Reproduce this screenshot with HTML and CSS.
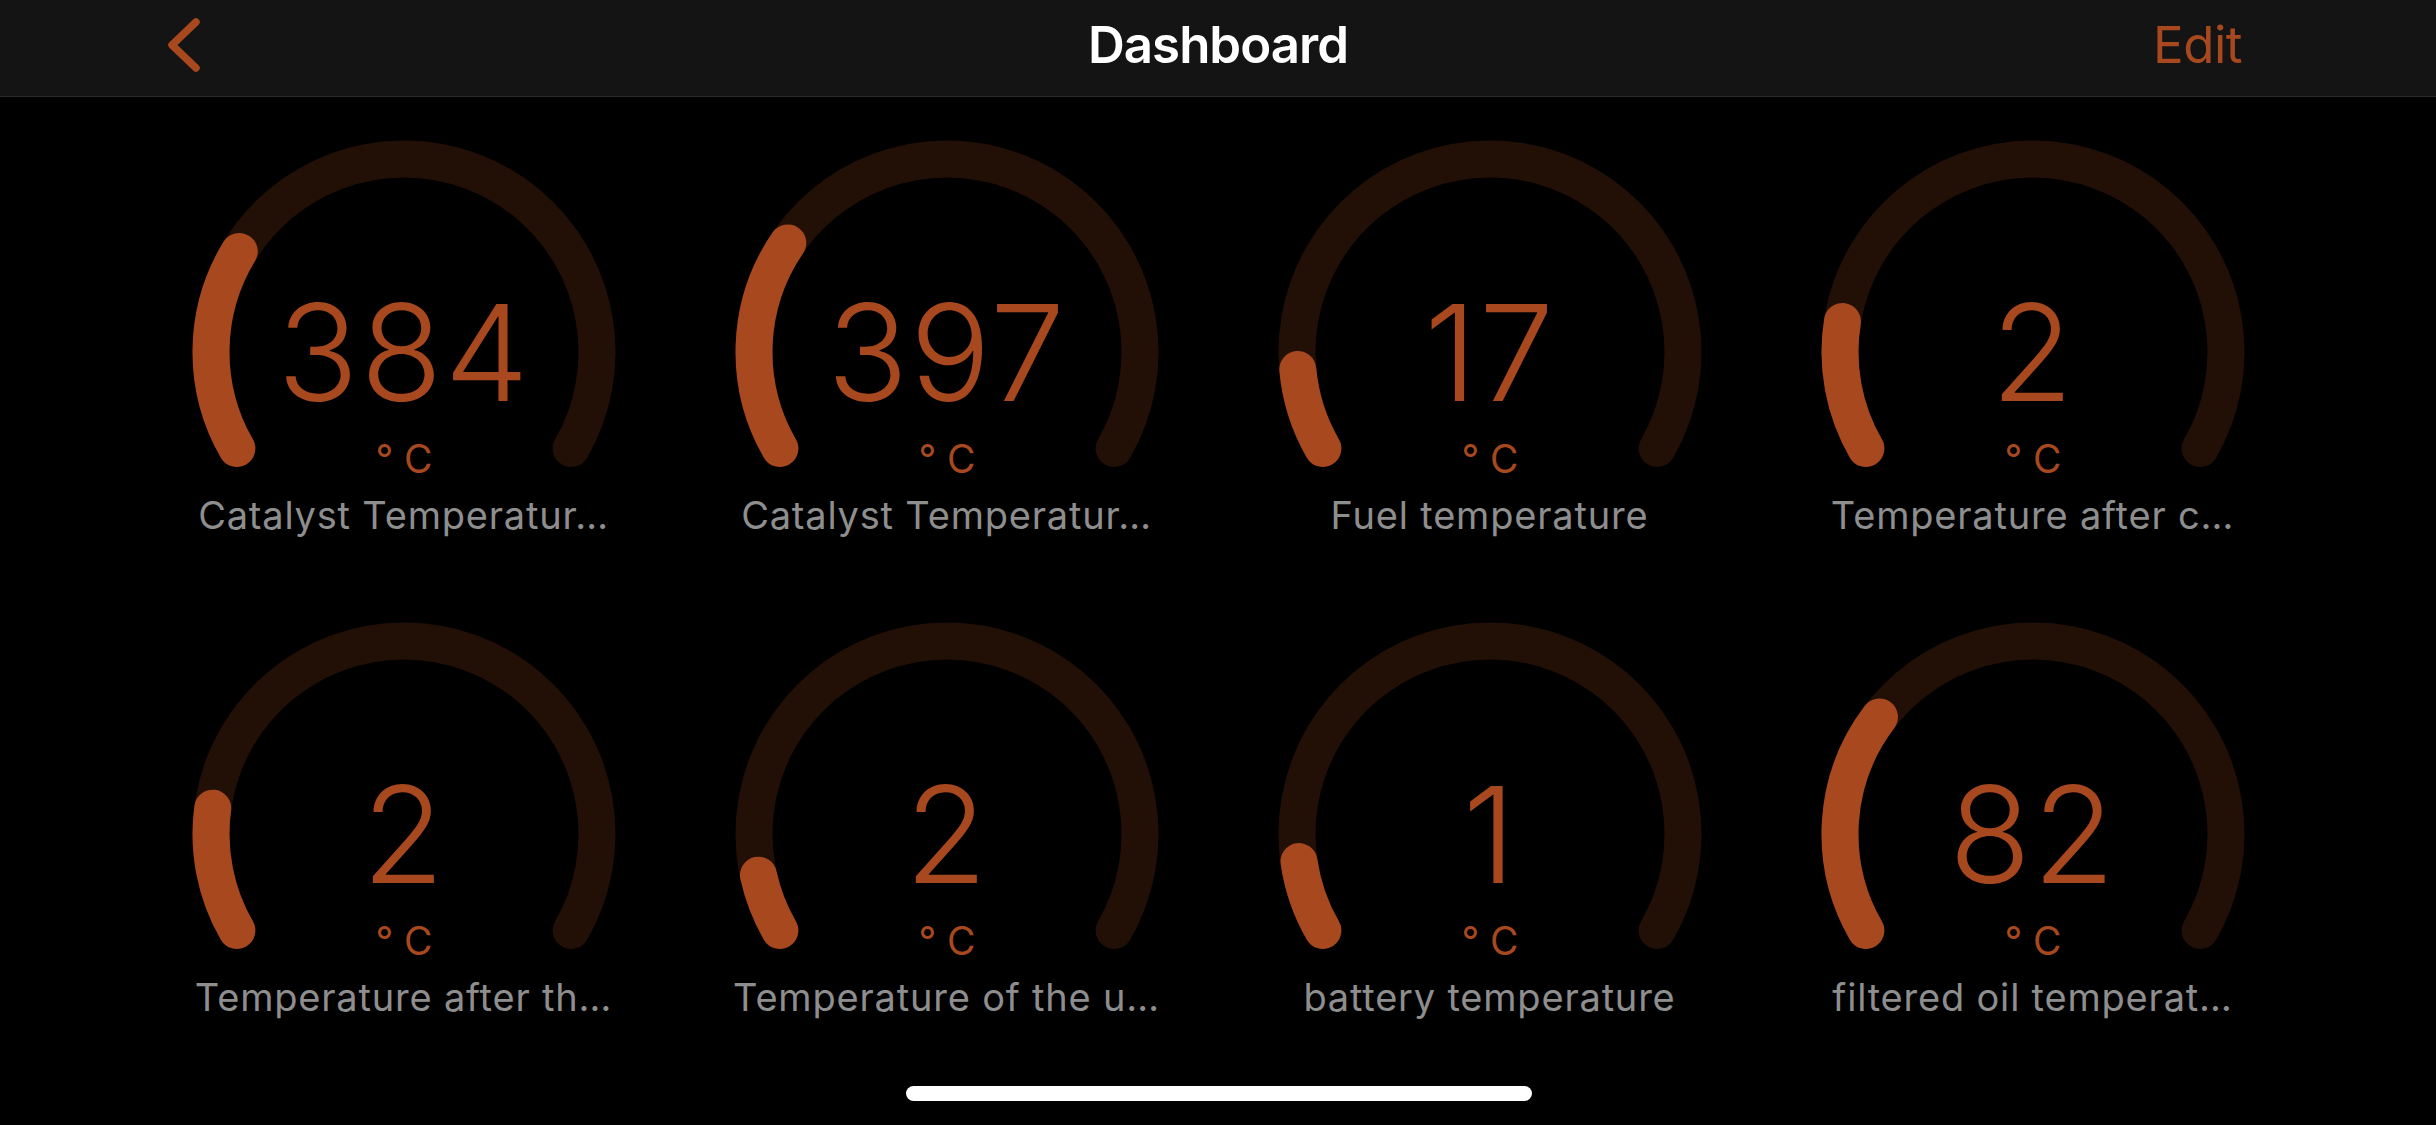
FILE: index.html
```html
<!DOCTYPE html>
<html lang="en">

<head>
  <meta charset="UTF-8">
  <meta name="viewport" content="width=device-width, initial-scale=1.0">
  <title>Dashboard</title>
  <link rel="stylesheet" href="styles.css">
</head>

<body>

  <div id="navBar">
    <div class="nav-left">
      <svg class="back-icon" width="40" height="89" viewBox="0 0 40 89">
        <polyline points="28,22 4,45 28,68" />
      </svg>
    </div>
    <div class="nav-title">Dashboard</div>
    <div class="nav-right">Edit</div>
  </div>

  <div id="gaugeGrid">

    <!-- row 1 -->
    <div class="gauge">
      <svg class="dial" width="424" height="345" viewBox="0 0 424 345">
        <path class="track" d="M44.86 308.5 A193 193 0 1 1 379.14 308.5" />
        <path class="fill" pathLength="240" stroke-dasharray="61.4 400" d="M44.86 308.5 A193 193 0 1 1 379.14 308.5" />
        <text class="value" x="212" y="261">384</text>
        <text class="unit" x="212" y="333">° C</text>
      </svg>
      <div class="label">Catalyst Temperatur…</div>
    </div>

    <div class="gauge">
      <svg class="dial" width="424" height="345" viewBox="0 0 424 345">
        <path class="track" d="M44.86 308.5 A193 193 0 1 1 379.14 308.5" />
        <path class="fill" pathLength="240" stroke-dasharray="64.4 400" d="M44.86 308.5 A193 193 0 1 1 379.14 308.5" />
        <text class="value" x="212" y="261">397</text>
        <text class="unit" x="212" y="333">° C</text>
      </svg>
      <div class="label">Catalyst Temperatur…</div>
    </div>

    <div class="gauge">
      <svg class="dial" width="424" height="345" viewBox="0 0 424 345">
        <path class="track" d="M44.86 308.5 A193 193 0 1 1 379.14 308.5" />
        <path class="fill" pathLength="240" stroke-dasharray="24.8 400" d="M44.86 308.5 A193 193 0 1 1 379.14 308.5" />
        <text class="value" x="212" y="261">17</text>
        <text class="unit" x="212" y="333">° C</text>
      </svg>
      <div class="label">Fuel temperature</div>
    </div>

    <div class="gauge">
      <svg class="dial" width="424" height="345" viewBox="0 0 424 345">
        <path class="track" d="M44.86 308.5 A193 193 0 1 1 379.14 308.5" />
        <path class="fill" pathLength="240" stroke-dasharray="39.1 400" d="M44.86 308.5 A193 193 0 1 1 379.14 308.5" />
        <text class="value" x="212" y="261">2</text>
        <text class="unit" x="212" y="333">° C</text>
      </svg>
      <div class="label">Temperature after c…</div>
    </div>

    <!-- row 2 -->
    <div class="gauge">
      <svg class="dial" width="424" height="345" viewBox="0 0 424 345">
        <path class="track" d="M44.86 308.5 A193 193 0 1 1 379.14 308.5" />
        <path class="fill" pathLength="240" stroke-dasharray="37.7 400" d="M44.86 308.5 A193 193 0 1 1 379.14 308.5" />
        <text class="value" x="212" y="261">2</text>
        <text class="unit" x="212" y="333">° C</text>
      </svg>
      <div class="label">Temperature after th…</div>
    </div>

    <div class="gauge">
      <svg class="dial" width="424" height="345" viewBox="0 0 424 345">
        <path class="track" d="M44.86 308.5 A193 193 0 1 1 379.14 308.5" />
        <path class="fill" pathLength="240" stroke-dasharray="17.7 400" d="M44.86 308.5 A193 193 0 1 1 379.14 308.5" />
        <text class="value" x="212" y="261">2</text>
        <text class="unit" x="212" y="333">° C</text>
      </svg>
      <div class="label">Temperature of the u…</div>
    </div>

    <div class="gauge">
      <svg class="dial" width="424" height="345" viewBox="0 0 424 345">
        <path class="track" d="M44.86 308.5 A193 193 0 1 1 379.14 308.5" />
        <path class="fill" pathLength="240" stroke-dasharray="21.8 400" d="M44.86 308.5 A193 193 0 1 1 379.14 308.5" />
        <text class="value" x="212" y="261">1</text>
        <text class="unit" x="212" y="333">° C</text>
      </svg>
      <div class="label">battery temperature</div>
    </div>

    <div class="gauge">
      <svg class="dial" width="424" height="345" viewBox="0 0 424 345">
        <path class="track" d="M44.86 308.5 A193 193 0 1 1 379.14 308.5" />
        <path class="fill" pathLength="240" stroke-dasharray="67.3 400" d="M44.86 308.5 A193 193 0 1 1 379.14 308.5" />
        <text class="value" x="212" y="261">82</text>
        <text class="unit" x="212" y="333">° C</text>
      </svg>
      <div class="label">filtered oil temperat…</div>
    </div>

  </div>

  <div class="home-indicator"></div>

</body>

</html>
```

FILE: styles.css
```css
body {
  background-color: #000;
  color: #fff;
  font-family: Inter, "Noto Sans", sans-serif;
  margin: 0;
  padding: 0;
  height: 1125px;
  overflow: hidden;
  position: relative;
}

/* top navigation bar */
#navBar {
  display: grid;
  grid-template-columns: 1fr auto 1fr;
  align-items: start;
  height: 96px;
  padding: 0 168px;
  background-color: #141414;
  border-bottom: 1px solid #2a2a2a;
}

.nav-left {
  justify-self: start;
  height: 89px;
}

.back-icon polyline {
  fill: none;
  stroke: #a8481e;
  stroke-width: 7.5;
  stroke-linecap: round;
  stroke-linejoin: round;
}

.nav-title {
  font-size: 51px;
  font-weight: 600;
  line-height: 89px;
  letter-spacing: -1px;
  color: #fff;
}

.nav-right {
  justify-self: end;
  margin-right: 26px;
  font-size: 51px;
  font-weight: 400;
  line-height: 89px;
  letter-spacing: -0.5px;
  color: #a8481e;
}

/* gauges */
#gaugeGrid {
  display: grid;
  grid-template-columns: repeat(4, 543px);
  justify-content: center;
  row-gap: 85px;
  padding-top: 43px;
}

.gauge {
  display: flex;
  flex-direction: column;
  align-items: center;
}

.dial {
  display: block;
}

.track,
.fill {
  fill: none;
  stroke-width: 37;
  stroke-linecap: round;
}

.track {
  stroke: #221007;
}

.fill {
  stroke: #a8481e;
}

.value {
  font-family: Inter, "Noto Sans", sans-serif;
  font-size: 134px;
  font-weight: 300;
  letter-spacing: 2px;
  fill: #a8481e;
  text-anchor: middle;
}

.unit {
  font-family: Inter, "Noto Sans", sans-serif;
  font-size: 39px;
  font-weight: 400;
  fill: #a8481e;
  text-anchor: middle;
}

.label {
  margin-top: 8px;
  font-size: 38px;
  line-height: 44px;
  letter-spacing: 0.8px;
  color: #8e8e8e;
  white-space: nowrap;
}

.home-indicator {
  position: absolute;
  left: 906px;
  bottom: 24px;
  width: 626px;
  height: 15px;
  border-radius: 8px;
  background-color: #fff;
}
```
